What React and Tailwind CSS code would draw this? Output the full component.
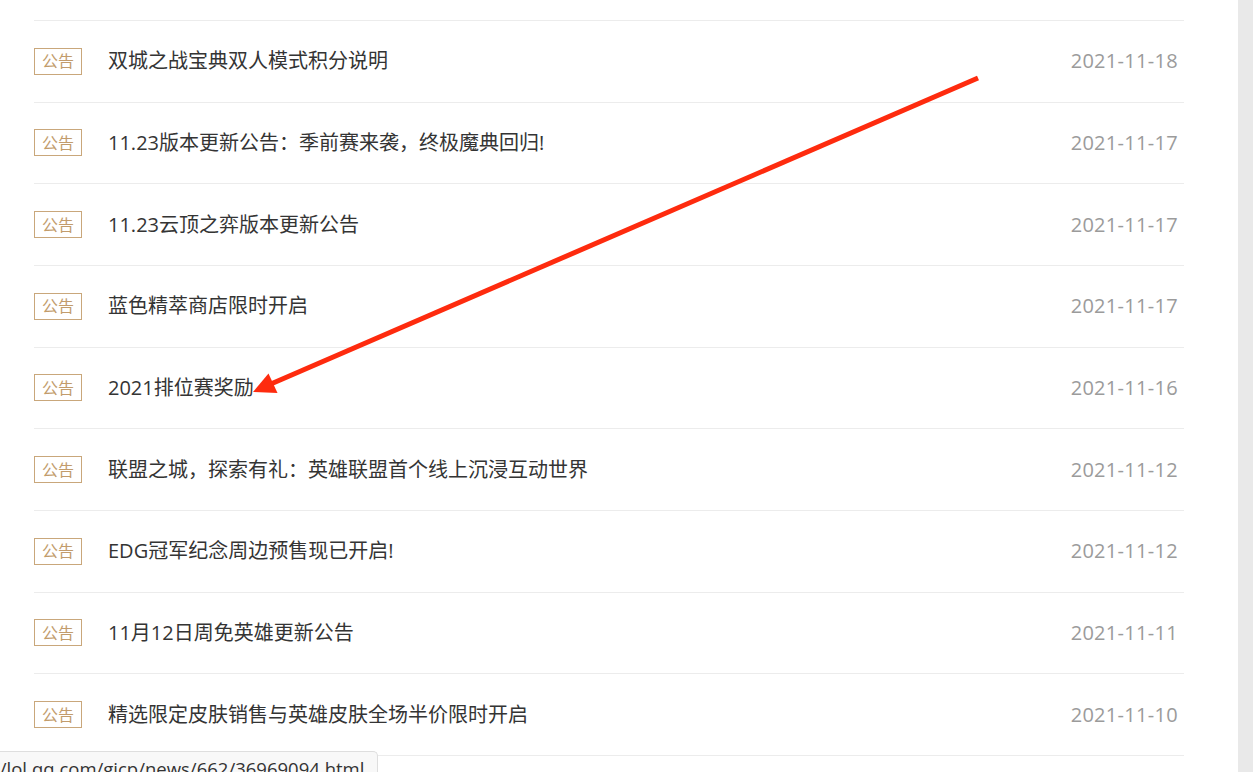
import React from "react";

const rows = [
  ["双城之战宝典双人模式积分说明", "2021-11-18"],
  ["11.23版本更新公告：季前赛来袭，终极魔典回归!", "2021-11-17"],
  ["11.23云顶之弈版本更新公告", "2021-11-17"],
  ["蓝色精萃商店限时开启", "2021-11-17"],
  ["2021排位赛奖励", "2021-11-16"],
  ["联盟之城，探索有礼：英雄联盟首个线上沉浸互动世界", "2021-11-12"],
  ["EDG冠军纪念周边预售现已开启!", "2021-11-12"],
  ["11月12日周免英雄更新公告", "2021-11-11"],
  ["精选限定皮肤销售与英雄皮肤全场半价限时开启", "2021-11-10"],
];

export default function App() {
  return (
    <div
      className="relative w-[1253px] h-[772px] overflow-hidden bg-white flex"
      style={{ fontFamily: '"Open Sans", "Noto Sans CJK SC", sans-serif' }}
    >
      <div className="flex-1 pl-[34px] pr-[54px] pt-[20px]">
        {rows.map(([title, date], i) => (
          <div
            key={i}
            className="h-[81.67px] border-t border-[#ececec] flex items-center"
          >
            <div className="w-[48px] h-[27px] border border-[#c9a77b] text-[#c29c6c] text-[16px] flex items-center justify-center leading-none shrink-0">
              公告
            </div>
            <div className="ml-[26px] flex-1 text-[20px] text-[#343434] leading-none whitespace-nowrap">
              {title}
            </div>
            <div className="mr-[6px] text-[20px] text-[#9b9b9b] leading-none tracking-[0.3px]">
              {date}
            </div>
          </div>
        ))}
        <div className="border-t border-[#ececec]" />
      </div>
      <div className="w-[15px] h-full bg-[#e9e9e9]" />

      <div className="absolute left-0 top-[751px] w-[378px] h-[30px] bg-[#f8f8f8] border-t border-r border-[#dedede] rounded-tr-[5px] overflow-hidden">
        <div className="ml-[-7px] mt-[5px] text-[18.5px] text-[#333] whitespace-nowrap leading-[24px]">
          //lol.qq.com/gicp/news/662/36969094.html
        </div>
      </div>

      <svg
        className="absolute left-0 top-0 pointer-events-none"
        width="1253"
        height="772"
        viewBox="0 0 1253 772"
      >
        <line
          x1="978"
          y1="78"
          x2="272"
          y2="383.5"
          stroke="#fe2b0e"
          strokeWidth="5"
        />
        <polygon points="253,392 268.5,373.5 277.5,393" fill="#fe2b0e" />
      </svg>
    </div>
  );
}
